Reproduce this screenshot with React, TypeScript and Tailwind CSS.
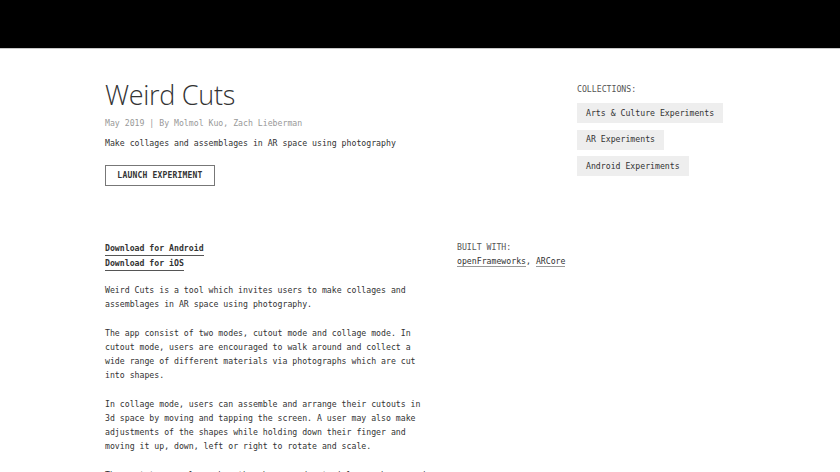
import React from "react";

const mono = { fontFamily: '"DejaVu Sans Mono", "Liberation Mono", monospace' };

const collections = ["Arts & Culture Experiments", "AR Experiments", "Android Experiments"];

const paragraphs = [
  "Weird Cuts is a tool which invites users to make collages and assemblages in AR space using photography.",
  "The app consist of two modes, cutout mode and collage mode. In cutout mode, users are encouraged to walk around and collect a wide range of different materials via photographs which are cut into shapes.",
  "In collage mode, users can assemble and arrange their cutouts in 3d space by moving and tapping the screen. A user may also make adjustments of the shapes while holding down their finger and moving it up, down, left or right to rotate and scale.",
  "The prototype explores how the shapes and materials can be reused in different places and invites a playful way of looking at the world.",
];

const App: React.FC = () => {
  return (
    <div className="min-h-screen w-full overflow-hidden bg-white text-[#333]" style={mono}>
      <div className="h-12 w-full bg-black"></div>
      <div className="h-px w-full bg-[#c8c8c8]"></div>

      <div className="flex pl-[105px] pt-[28px]">
        <div className="w-[472px]">
          <h1
            className="text-[27px] font-light leading-[36px] tracking-[-0.3px] text-[#333]"
            style={{ fontFamily: '"Open Sans", sans-serif' }}
          >
            Weird Cuts
          </h1>
          <p className="mt-[3px] text-[8.2px] leading-[14px] text-[#999]">
            May 2019 | By Molmol Kuo, Zach Lieberman
          </p>
          <p className="mt-[6px] text-[8.2px] leading-[14px]">
            Make collages and assemblages in AR space using photography
          </p>
          <button className="mt-[15px] flex h-[21px] w-[110px] items-center justify-center border border-[#777] text-[8px] font-bold tracking-[0.2px] text-[#333]">
            LAUNCH EXPERIMENT
          </button>
        </div>
        <div className="pt-[5px]">
          <p className="text-[8.2px] leading-[14px] text-[#555]">COLLECTIONS:</p>
          <div className="mt-[7px] flex flex-col items-start gap-[6.5px]">
            {collections.map((c) => (
              <span
                key={c}
                className="flex h-[20px] items-center bg-[#eeeeee] px-[9px] text-[8.2px] text-[#333]"
              >
                {c}
              </span>
            ))}
          </div>
        </div>
      </div>

      <div className="mt-[54px] flex pl-[105px]">
        <div className="w-[352px] pt-[2px]">
          <div className="flex flex-col items-start text-[8.2px] font-bold leading-[14px]">
            <a className="border-b border-[#555] leading-[13px]">Download for Android</a>
            <a className="mt-[1px] border-b border-[#555] leading-[13px]">Download for iOS</a>
          </div>
          <div className="mt-[12px] flex w-[330px] flex-col gap-[15px] text-[8.2px] leading-[14px]">
            {paragraphs.map((p, i) => (
              <p key={i}>{p}</p>
            ))}
          </div>
        </div>
        <div>
          <p className="text-[8.2px] leading-[14px] text-[#555]">BUILT WITH:</p>
          <p className="text-[8.2px] leading-[14px]">
            <a className="border-b border-[#999]">openFrameworks</a>,{" "}
            <a className="border-b border-[#999]">ARCore</a>
          </p>
        </div>
      </div>
    </div>
  );
};

export default App;
